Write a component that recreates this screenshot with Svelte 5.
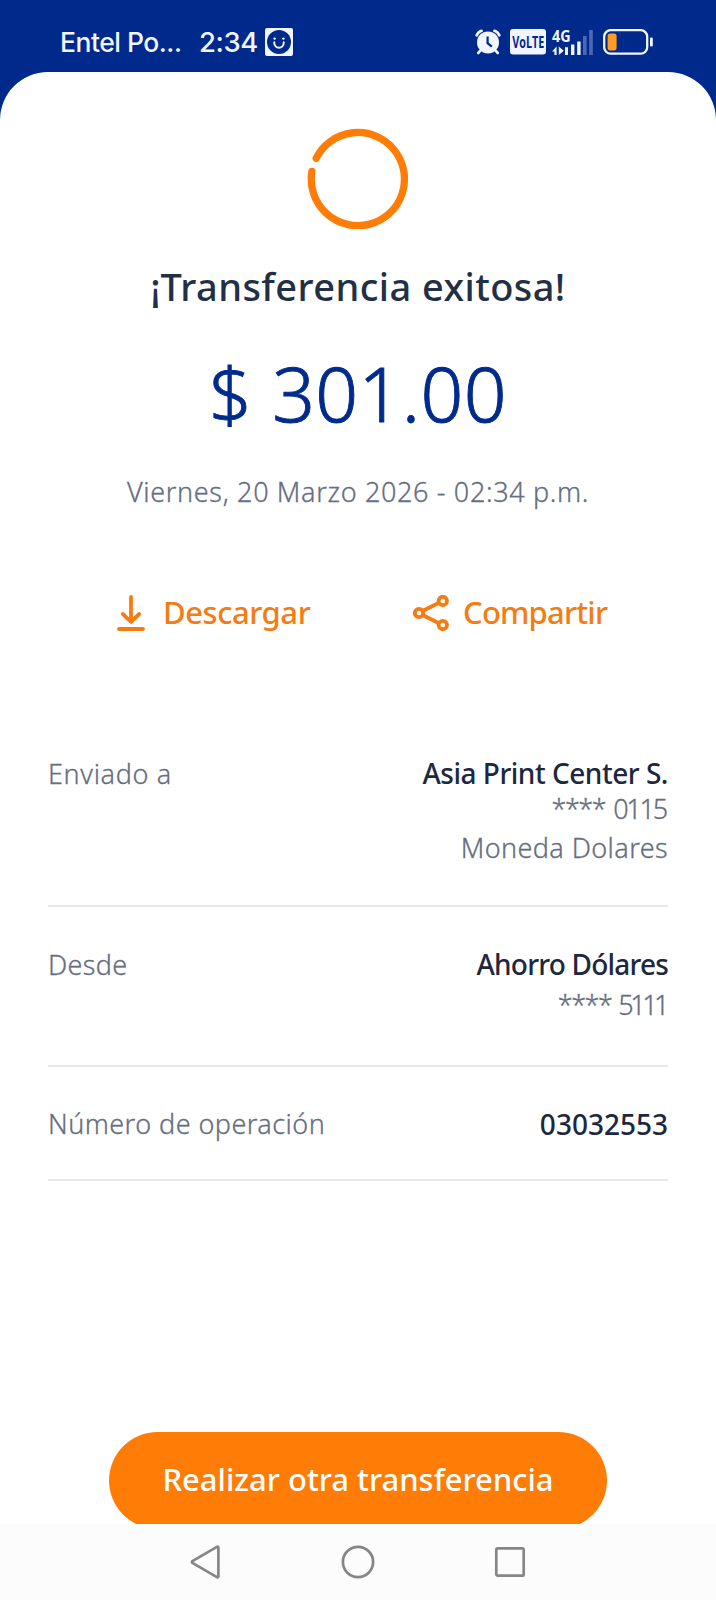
<!--
@component
Transfer receipt screen: amount, date, share actions and operation details.
-->
<script>
  let amount = '$ 301.00';
  let date = 'Viernes, 20 Marzo 2026 - 02:34 p.m.';
</script>

<div class="screen">
  <header class="status">
    <span class="carrier">Entel Po...</span>
    <span class="clock">2:34</span>
    <svg class="face" width="28" height="28" viewBox="0 0 28 28">
      <rect width="28" height="28" rx="2" fill="#f1f5ff" />
      <circle cx="14" cy="14" r="12" fill="#00298c" />
      <path d="M9.3 14.2v.8a4.7 4.7 0 0 0 9.4 0v-.8" fill="none" stroke="#f1f5ff" stroke-width="2" stroke-linecap="round" />
      <circle cx="9.6" cy="10.6" r="1.2" fill="#f1f5ff" />
      <circle cx="18.4" cy="10.6" r="1.2" fill="#f1f5ff" />
    </svg>

    <div class="indicators">
      <svg class="alarm" width="26" height="26" viewBox="0 0 26 26">
        <g fill="none" stroke="#f1f5ff" stroke-width="2.6" stroke-linecap="round">
          <path d="M1.6 6.4A8 8 0 0 1 6.6 1.8M19.4 1.8a8 8 0 0 1 5 4.6" />
          <path d="M5.6 21.4 3.2 24M20.4 21.4l2.4 2.6" />
        </g>
        <circle cx="13" cy="13.4" r="11" fill="#f1f5ff" />
        <path d="M12.6 7.6v6.6l4.2 3.4" fill="none" stroke="#00298c" stroke-width="2.2" />
      </svg>
      <svg class="volte" width="36" height="26" viewBox="0 0 36 26">
        <rect width="36" height="25.5" rx="3" fill="#f1f5ff" />
        <text x="2.3" y="18.6" textLength="32" lengthAdjust="spacingAndGlyphs">VoLTE</text>
      </svg>
      <svg class="signal" width="42" height="28" viewBox="0 0 42 28">
        <text x="0" y="12.6" textLength="18.5" lengthAdjust="spacingAndGlyphs">4G</text>
        <path d="M0 22.4 4.6 17.6V26H2.4v-3.6zM6.8 17.6V26l5-4.2z" fill="#f1f5ff" />
        <path d="M13 18.2h3V26h-3zM19 15.4h3.4V26H19zM25.2 12.4h3.4V26h-3.4z" fill="#f1f5ff" />
        <path d="M31 7h3.6v19H31zM37.2 1h3.6v25h-3.6z" fill="#4a68b4" />
      </svg>
      <svg class="battery" width="50" height="26" viewBox="0 0 50 26">
        <rect x="1.2" y="1.2" width="43" height="23.4" rx="6.4" fill="none" stroke="#f1f5ff" stroke-width="2.3" />
        <rect x="4.6" y="4.4" width="9" height="17" rx="2.6" fill="#ff9c24" />
        <rect x="47" y="8.4" width="2.8" height="9.2" rx="1" fill="#f1f5ff" />
      </svg>
    </div>
  </header>

  <main class="sheet">
    <svg class="ring" width="102" height="102" viewBox="0 0 102 102">
      <path d="M9.2 31.2A46.6 46.6 0 1 1 4.9 44.4" />
    </svg>

    <h1>¡Transferencia exitosa!</h1>
    <p class="amount">{amount}</p>
    <p class="date">{date}</p>

    <div class="actions">
      <button class="action download">
        <svg width="28" height="36" viewBox="0 0 28 36">
          <path d="M14 2v24.5M5.8 19l8.2 7.8 8.2-7.8M2 34h24" />
        </svg>
        <span>Descargar</span>
      </button>
      <button class="action share">
        <svg width="36" height="36" viewBox="0 0 36 36">
          <path d="M10 15.8 25.6 8M10 20.2 25.6 28" />
          <circle cx="6" cy="18" r="4.2" />
          <circle cx="29.8" cy="6" r="4.2" />
          <circle cx="29.8" cy="30" r="4.2" />
        </svg>
        <span>Compartir</span>
      </button>
    </div>

    <dl class="details">
      <div class="row to">
        <dt class="recipient">Enviado a</dt>
        <dd>
          <strong>Asia Print Center S.</strong>
          <span class="account">**** <span class="digits">0115</span></span>
          <span class="currency">Moneda Dolares</span>
        </dd>
      </div>
      <div class="row from">
        <dt>Desde</dt>
        <dd>
          <strong>Ahorro Dólares</strong>
          <span class="account">**** <span class="digits">5111</span></span>
        </dd>
      </div>
      <div class="row operation">
        <dt>Número de operación</dt>
        <dd><strong>03032553</strong></dd>
      </div>
    </dl>

    <button class="again">Realizar otra transferencia</button>
  </main>

  <nav class="navbar">
    <svg width="34" height="38" viewBox="0 0 34 38">
      <path d="M29.4 4.6v28.8a1 1 0 0 1-1.5.8L3.4 19.8a1 1 0 0 1 0-1.7L27.9 3.8a1 1 0 0 1 1.5.8z" />
    </svg>
    <svg width="34" height="38" viewBox="0 0 34 38">
      <circle cx="17" cy="19" r="15.1" />
    </svg>
    <svg width="34" height="38" viewBox="0 0 34 38">
      <rect x="3.3" y="5.3" width="27.4" height="27.4" rx="1.5" />
    </svg>
  </nav>
</div>

<style>
  :global(body) {
    margin: 0;
    background: #00298c;
  }

  .screen {
    display: flex;
    flex-direction: column;
    width: 716px;
    height: 1600px;
    overflow: hidden;
    background: #00298c;
    font-family: 'Noto Sans', 'Open Sans', sans-serif;
    color: #666e80;
  }

  .status {
    display: flex;
    flex: none;
    align-items: flex-start;
    box-sizing: border-box;
    height: 72px;
    padding: 28px 63px 0 60px;
    color: #f1f5ff;
    font-family: Inter, sans-serif;
    font-weight: 500;
    line-height: 28px;
    white-space: nowrap;
  }

  .carrier {
    width: 139px;
    font-size: 26.5px;
    letter-spacing: -0.5px;
  }

  .clock {
    width: 66px;
    font-size: 27.5px;
    letter-spacing: -0.4px;
  }

  .indicators {
    display: flex;
    margin-left: auto;
    padding-top: 1px;
  }

  .volte,
  .signal {
    overflow: visible;
  }

  .volte {
    margin-left: 9px;
  }

  .signal {
    margin-left: 6px;
  }

  .battery {
    margin-left: 9px;
  }

  .volte text,
  .signal text {
    font-family: 'Open Sans', sans-serif;
    font-size: 16.5px;
    font-weight: 700;
  }

  .volte text {
    fill: #00298c;
  }

  .signal text {
    fill: #f1f5ff;
  }

  .sheet {
    display: flex;
    flex: 1;
    flex-direction: column;
    align-items: center;
    min-height: 0;
    overflow: hidden;
    padding-top: 55px;
    border-radius: 48px 48px 0 0;
    background: #fff;
  }

  .ring {
    flex: none;
  }

  .ring path {
    fill: none;
    stroke: #ff7c06;
    stroke-width: 7.3;
    stroke-linecap: round;
  }

  h1 {
    margin: 33px 0 0;
    color: #232f45;
    font-size: 38px;
    font-weight: 500;
    line-height: 48px;
    letter-spacing: 0.42px;
  }

  .amount {
    margin: 38px 0 0;
    color: #002b8c;
    font-size: 75px;
    font-weight: 300;
    line-height: 90px;
    letter-spacing: 0.4px;
    -webkit-text-stroke: 0.9px #002b8c;
  }

  .date {
    margin: 36px 0 0;
    font-size: 27px;
    font-weight: 300;
    line-height: 36px;
    letter-spacing: 0.65px;
    -webkit-text-stroke: 0.3px #666e80;
  }

  .actions {
    display: grid;
    grid-template-columns: 296px auto;
    align-self: flex-start;
    margin: 82px 0 0 117px;
  }

  .action {
    display: flex;
    align-items: center;
    padding: 0;
    border: 0;
    background: none;
    color: #f57c12;
    font: 500 31px/40px 'Noto Sans', sans-serif;
  }

  .action svg {
    margin-top: 2px;
    fill: none;
    stroke: #f57c12;
    stroke-width: 3.8;
    stroke-linecap: round;
    stroke-linejoin: round;
  }

  .download {
    gap: 18px;
    letter-spacing: -0.45px;
  }

  .share {
    gap: 14px;
    letter-spacing: -0.8px;
  }

  .details {
    align-self: stretch;
    margin: 123px 48px 0;
  }

  .row {
    display: flex;
    justify-content: space-between;
    border-bottom: 2px solid #e7e8ea;
    font-size: 27px;
    font-weight: 300;
    line-height: 36px;
  }

  .to {
    padding-bottom: 39px;
  }

  .from {
    padding: 38px 0 42px;
  }

  .operation {
    padding: 38px 0 37px;
  }

  dt,
  .account,
  .currency {
    -webkit-text-stroke: 0.3px #666e80;
  }

  dt {
    padding-top: 1px;
    letter-spacing: 0.45px;
  }

  .recipient {
    letter-spacing: 0.65px;
  }

  .from dt {
    padding-top: 2px;
    letter-spacing: 0.3px;
  }

  dd {
    display: flex;
    flex-direction: column;
    align-items: flex-end;
    margin: 0;
  }

  strong {
    color: #1d2840;
    font-size: 28px;
    font-weight: 500;
  }

  .to strong {
    letter-spacing: -0.48px;
  }

  .from strong {
    padding-top: 1px;
    letter-spacing: -0.8px;
  }

  .account {
    margin-right: 2px;
    letter-spacing: -1.5px;
    word-spacing: 2.5px;
  }

  .to .digits {
    letter-spacing: -2.2px;
  }

  .from .digits {
    letter-spacing: -3.5px;
  }

  .from .account {
    margin-top: 5px;
    word-spacing: 1.5px;
  }

  .currency {
    margin-top: 3px;
    letter-spacing: 0.4px;
  }

  .operation dd {
    padding-top: 1px;
  }

  .again {
    flex: none;
    width: 498px;
    height: 97px;
    margin-top: 251px;
    padding: 0 0 4px;
    border: 0;
    border-radius: 49px;
    background: #ff7c06;
    color: #fff;
    font: 500 31px/40px 'Noto Sans', sans-serif;
  }

  .navbar {
    display: flex;
    flex: none;
    align-items: center;
    justify-content: center;
    gap: 118px;
    height: 76px;
    background: #fcfcfc;
  }

  .navbar svg {
    fill: none;
    stroke: #868686;
    stroke-width: 2.7;
  }
</style>
